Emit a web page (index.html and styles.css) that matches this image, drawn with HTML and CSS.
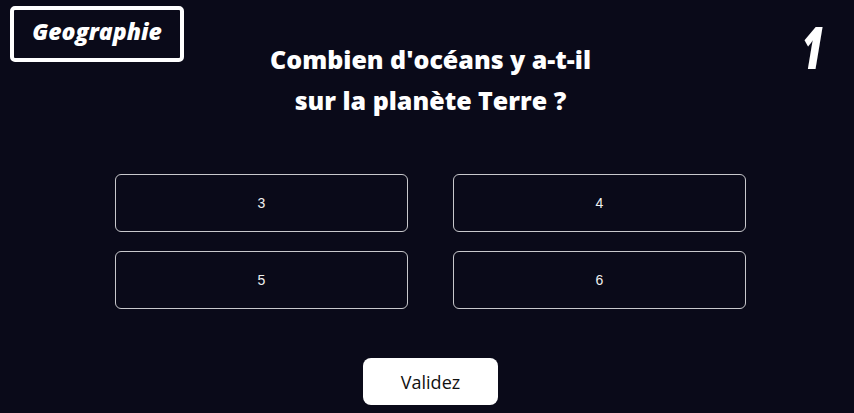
FILE: index.html
```html
<!DOCTYPE html>
<html lang="fr">
<head>
<meta charset="utf-8">
<link rel="stylesheet" href="styles.css">
</head>
<body>
<main class="page">
  <header class="top">
    <div class="category">Geographie</div>
    <h1 class="question">Combien d'océans y a-t-il<br>sur la planète Terre ?</h1>
    <div class="number">1</div>
  </header>
  <section class="answers">
    <button class="answer">3</button>
    <button class="answer">4</button>
    <button class="answer">5</button>
    <button class="answer">6</button>
  </section>
  <div class="actions">
    <button class="validate">Validez</button>
  </div>
</main>
</body>
</html>
```
FILE: styles.css
```css
html, body {
  margin: 0;
  padding: 0;
  background: #0a0a19;
  height: 100%;
  overflow: hidden;
}
.page {
  padding: 6px 3px 0 10px;
  box-sizing: border-box;
  width: 854px;
}
.top {
  display: grid;
  grid-template-columns: 1fr auto 1fr;
  align-items: start;
}
.category {
  justify-self: start;
  width: 174px;
  height: 56px;
  box-sizing: border-box;
  border: 4px solid #fff;
  border-radius: 5px;
  display: flex;
  align-items: center;
  justify-content: center;
  color: #fff;
  font-family: "Open Sans", sans-serif;
  font-weight: 800;
  font-style: italic;
  font-size: 23px;
  padding-bottom: 6px;
}
.question {
  margin: 33px 0 0;
  color: #fff;
  font-family: "Open Sans", sans-serif;
  font-weight: 800;
  font-size: 25px;
  line-height: 41px;
  text-align: center;
}
.number {
  justify-self: end;
  margin: 12px 29px 0 0;
  color: #fff;
  font-family: "Open Sans", sans-serif;
  font-weight: 800;
  font-style: italic;
  font-size: 58px;
  line-height: 58px;
  font-stretch: 75%;
  transform: scaleX(0.8);
  transform-origin: right center;
}
.answers {
  display: grid;
  grid-template-columns: 293px 293px;
  column-gap: 45px;
  row-gap: 19px;
  justify-content: center;
  margin-top: 53px;
}
.answer {
  height: 58px;
  background: transparent;
  border: 1px solid #c8c8cc;
  border-radius: 6px;
  color: #f0f0f0;
  font-family: "Liberation Sans", Arial, sans-serif;
  font-size: 14px;
}
.actions {
  display: flex;
  justify-content: center;
  margin-top: 49px;
}
.validate {
  width: 135px;
  height: 47px;
  background: #fff;
  border: none;
  border-radius: 8px;
  color: #111;
  font-family: "Open Sans", sans-serif;
  font-size: 18px;
}
```
